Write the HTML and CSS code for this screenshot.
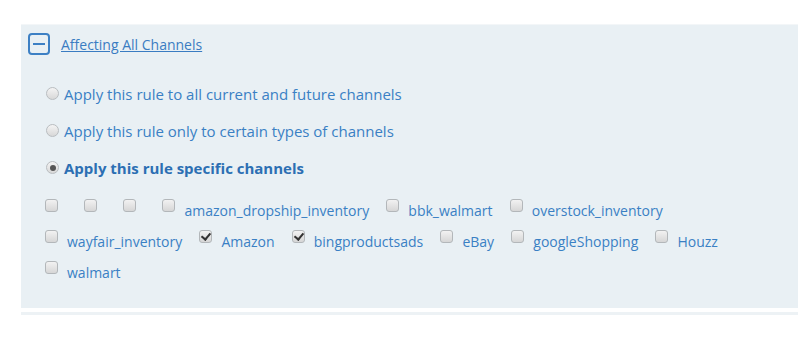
FILE: index.html
```html
<!DOCTYPE html>
<html>
<head>
    <title>Channel Rule</title>
    <link rel="stylesheet" href="styles.css">
</head>
<body>
    <div class="rule-panel">
        <div class="panel-head">
            <span class="toggle-box"><span class="toggle-bar"></span></span>
            <a href="#" class="head-link">Affecting All Channels</a>
        </div>

        <div class="scope-list">
            <label class="scope-option">
                <input type="radio" name="scope">
                <span>Apply this rule to all current and future channels</span>
            </label>
            <label class="scope-option">
                <input type="radio" name="scope">
                <span>Apply this rule only to certain types of channels</span>
            </label>
            <label class="scope-option selected">
                <input type="radio" name="scope" checked>
                <span>Apply this rule specific channels</span>
            </label>
        </div>

        <div class="channel-list">
            <label class="channel"><input type="checkbox"><span></span></label>
            <label class="channel"><input type="checkbox"><span></span></label>
            <label class="channel"><input type="checkbox"><span></span></label>
            <label class="channel"><input type="checkbox"><span>amazon_dropship_inventory</span></label>
            <label class="channel"><input type="checkbox"><span>bbk_walmart</span></label>
            <label class="channel"><input type="checkbox"><span>overstock_inventory</span></label>
            <br>
            <label class="channel"><input type="checkbox"><span>wayfair_inventory</span></label>
            <label class="channel"><input type="checkbox" checked><span>Amazon</span></label>
            <label class="channel"><input type="checkbox" checked><span>bingproductsads</span></label>
            <label class="channel"><input type="checkbox"><span>eBay</span></label>
            <label class="channel"><input type="checkbox"><span>googleShopping</span></label>
            <label class="channel"><input type="checkbox"><span>Houzz</span></label>
            <br>
            <label class="channel"><input type="checkbox"><span>walmart</span></label>
        </div>
    </div>
    <div class="panel-rule"></div>
</body>
</html>
```

FILE: styles.css
```css
body {
    font-family: "Open Sans", "Noto Sans", Arial, sans-serif;
    background-color: #fff;
    margin: 0;
    padding: 24px 11px 0 21px;
}

.rule-panel {
    background-color: #e9f0f4;
    border-top: 1px solid #f3f6f8;
    padding: 8px 0 22px 7px;
    height: 253px;
}

.panel-head {
    display: flex;
    align-items: center;
    gap: 11px;
}

.toggle-box {
    width: 18px;
    height: 18px;
    border: 2px solid #3d80c4;
    border-radius: 4px;
    display: flex;
    align-items: center;
    justify-content: center;
}

.toggle-bar {
    width: 12px;
    height: 2px;
    background-color: #3d80c4;
}

.head-link {
    color: #3a7cc2;
    font-size: 14px;
    text-decoration: underline;
}

.scope-list {
    padding: 20px 0 0 18px;
}

.scope-option {
    display: flex;
    align-items: center;
    gap: 5px;
    height: 37px;
    color: #3a80c4;
    font-size: 15px;
}

.scope-option.selected {
    color: #2c6fb3;
    font-weight: bold;
}

input[type="radio"] {
    appearance: none;
    width: 13px;
    height: 13px;
    margin: 0;
    border: 1px solid #b9bdc0;
    border-radius: 50%;
    background: linear-gradient(#f4f4f4, #d8d8d8);
    position: relative;
}

input[type="radio"]:checked::after {
    content: "";
    position: absolute;
    left: 2.5px;
    top: 2.5px;
    width: 6px;
    height: 6px;
    border-radius: 50%;
    background-color: #555;
}

.channel-list {
    padding: 9px 0 0 17px;
    line-height: 30px;
}

.channel {
    display: inline-block;
    margin-right: 13px;
    color: #3a80c4;
    font-size: 14px;
}

.channel span {
    margin-left: 9px;
}

input[type="checkbox"] {
    appearance: none;
    width: 13px;
    height: 13px;
    margin: 0;
    border: 1px solid #b3b7ba;
    border-radius: 3px;
    background: linear-gradient(#f2f2f2, #d6d6d6);
    vertical-align: 4px;
    position: relative;
}

input[type="checkbox"]:checked::after {
    content: "";
    position: absolute;
    left: 3px;
    top: 0px;
    width: 4px;
    height: 7px;
    border: solid #333;
    border-width: 0 2px 2px 0;
    transform: rotate(40deg);
}

.panel-rule {
    height: 3px;
    margin-top: 4px;
    background-color: #edf2f5;
}
```
